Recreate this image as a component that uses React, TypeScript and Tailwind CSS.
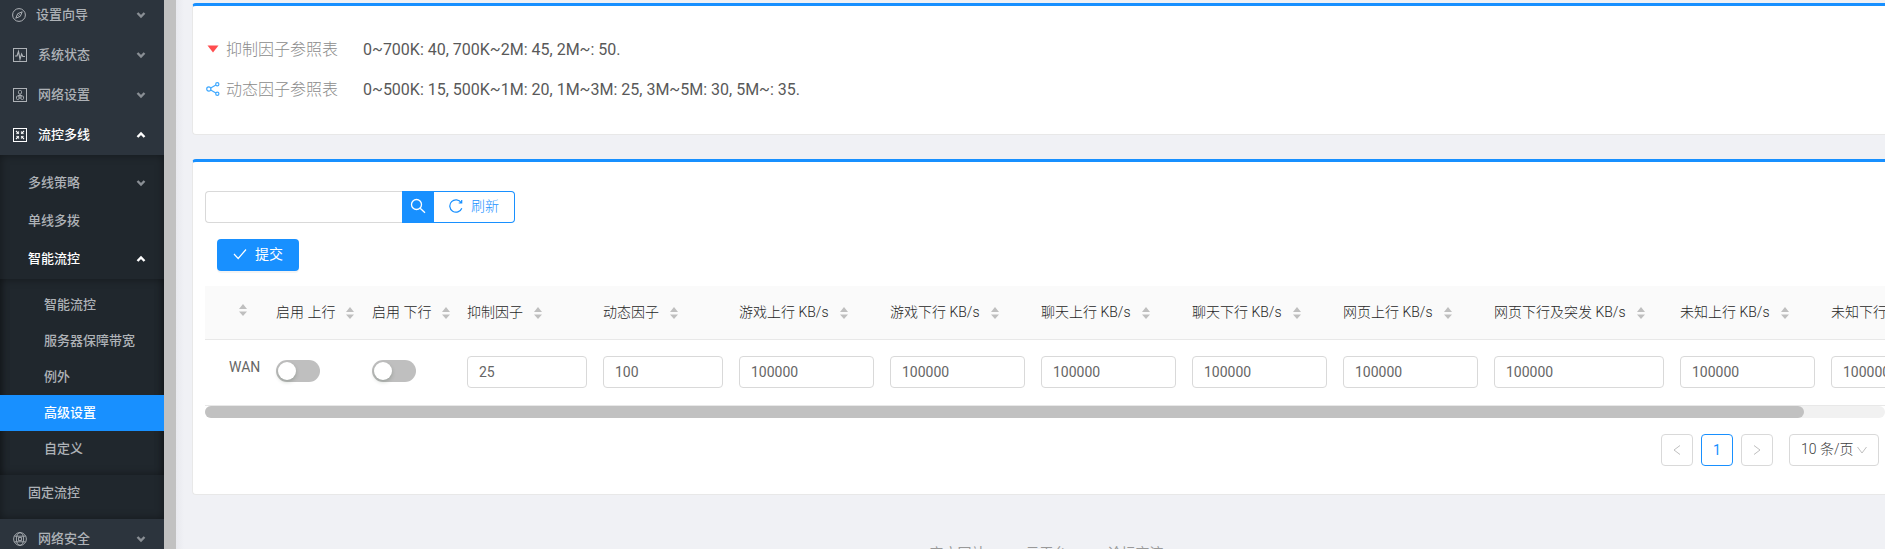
import React, { useState } from 'react';

type IconProps = { className?: string };

const Chevron: React.FC<{ open?: boolean }> = ({ open }) => (
  <svg viewBox="0 0 10 8" className="w-[10px] h-2" fill="none" stroke="currentColor" strokeWidth="2.4">
    <path d={open ? 'M1.5 6 5 2.5 8.5 6' : 'M1.5 2 5 5.5 8.5 2'} />
  </svg>
);

const CompassIcon: React.FC<IconProps> = ({ className }) => (
  <svg viewBox="0 0 14 14" className={className} fill="none" stroke="currentColor">
    <circle cx="7" cy="7" r="6.4" />
    <path d="M10.2 3.8 8.3 8.3 3.8 10.2 5.7 5.7Z" />
    <path d="M6.4 7.6 7.6 6.4" />
  </svg>
);

const StatusIcon: React.FC<IconProps> = ({ className }) => (
  <svg viewBox="0 0 14 14" className={className} fill="none" stroke="currentColor">
    <rect x="0.5" y="0.5" width="13" height="13" />
    <path d="M2 8h2l1.5-4.5L7 11l1.6-5L9.8 8.5H12" strokeWidth="1.2" />
  </svg>
);

const NetworkIcon: React.FC<IconProps> = ({ className }) => (
  <svg viewBox="0 0 14 14" className={className} fill="none" stroke="currentColor">
    <rect x="0.5" y="0.5" width="13" height="13" />
    <g strokeWidth="0.9">
      <rect x="5.5" y="2.5" width="3" height="3.4" rx="1" />
      <path d="M7 6v5M5 7.5h4" />
      <rect x="3.5" y="8" width="2.5" height="3.5" rx="1" />
      <rect x="8" y="8" width="2.5" height="3.5" rx="1" />
    </g>
  </svg>
);

const FlowIcon: React.FC<IconProps> = ({ className }) => (
  <svg viewBox="0 0 14 14" className={className} fill="none" stroke="currentColor">
    <rect x="0.5" y="0.5" width="13" height="13" />
    <path d="M3 3l2.6 2.6M11 3 8.4 5.6M3 11l2.6-2.6M11 11 8.4 8.4" strokeWidth="1.1" />
    <path d="M5.6 3.2v2.4H3.2M8.4 3.2v2.4h2.4M5.6 10.8V8.4H3.2M8.4 10.8V8.4h2.4" strokeWidth="0.8" />
  </svg>
);

const GlobeIcon: React.FC<IconProps> = ({ className }) => (
  <svg viewBox="0 0 14 14" className={className} fill="none" stroke="currentColor" strokeWidth="0.9">
    <circle cx="7" cy="7" r="6.4" />
    <ellipse cx="7" cy="7" rx="3.6" ry="6.4" />
    <path d="M1.4 4.2h11.2M1.4 9.8h11.2" />
    <rect x="5.6" y="5.6" width="2.8" height="2.8" />
  </svg>
);

const flowPages = ['智能流控', '服务器保障带宽', '例外', '高级设置', '自定义'];

const columns = [
  { title: '抑制因子', value: '25', width: 'w-[136px]' },
  { title: '动态因子', value: '100', width: 'w-[136px]' },
  { title: '游戏上行 KB/s', value: '100000', width: 'w-[151px]' },
  { title: '游戏下行 KB/s', value: '100000', width: 'w-[151px]' },
  { title: '聊天上行 KB/s', value: '100000', width: 'w-[151px]' },
  { title: '聊天下行 KB/s', value: '100000', width: 'w-[151px]' },
  { title: '网页上行 KB/s', value: '100000', width: 'w-[151px]' },
  { title: '网页下行及突发 KB/s', value: '100000', width: 'w-[186px]' },
  { title: '未知上行 KB/s', value: '100000', width: 'w-[151px]' },
  { title: '未知下行 KB/s', value: '100000', width: 'w-[151px]' },
];

type MenuItemProps = { label: string; icon: React.FC<IconProps>; open?: boolean; className?: string };

const MenuItem: React.FC<MenuItemProps> = ({ label, icon: Icon, open, className = 'pl-[13px] gap-[11px]' }) => (
  <a href="#" className={`flex h-10 items-center pr-[18px] ${className} ${open ? 'text-white' : 'text-[#aeb2b7]'}`}>
    <Icon className="w-[14px] h-[14px]" />
    <span className="flex-1">{label}</span>
    <span className={open ? 'text-white' : 'text-[#8a8f95]'}>
      <Chevron open={open} />
    </span>
  </a>
);

const Sidebar: React.FC = () => (
  <aside className="flex w-44 shrink-0 overflow-hidden">
    <nav className="-mt-[5px] flex-1 bg-[#2c343d] text-[13px] font-medium">
      <MenuItem label="设置向导" icon={CompassIcon} className="pl-3 gap-[10px]" />
      <MenuItem label="系统状态" icon={StatusIcon} />
      <MenuItem label="网络设置" icon={NetworkIcon} />
      <MenuItem label="流控多线" icon={FlowIcon} open />
      <div className="bg-[#20272d] py-2 text-[#aeb2b7] shadow-[inset_0_0_8px_rgba(0,0,0,0.4)]">
        <a href="#" className="flex h-[39px] items-center justify-between pl-7 pr-[18px]">
          多线策略
          <span className="text-[#8a8f95]"><Chevron /></span>
        </a>
        <a href="#" className="flex h-[38px] items-center pl-7">单线多拨</a>
        <a href="#" className="flex h-[38px] items-center justify-between pl-7 pr-[18px] text-white">
          智能流控
          <Chevron open />
        </a>
        <div className="mt-px py-2 shadow-[inset_0_0_8px_rgba(0,0,0,0.4)]">
          {flowPages.map((page) => (
            <a
              key={page}
              href="#"
              className={`flex h-9 items-center pl-11 ${page === '高级设置' ? 'bg-[#1890ff] text-white' : ''}`}
            >
              {page}
            </a>
          ))}
        </div>
        <a href="#" className="flex h-9 items-center pl-7">固定流控</a>
      </div>
      <MenuItem label="网络安全" icon={GlobeIcon} />
    </nav>
    {/* Scrollbar */}
    <div className="w-3 bg-[#c1c1c1]" />
  </aside>
);

const Sorter: React.FC = () => (
  <svg viewBox="0 0 8 12" className="inline-block w-2 h-3 text-[#bfbfbf]" fill="currentColor">
    <path d="M4 0 8 5H0zM4 12 0 7.5H8z" />
  </svg>
);

const HeaderLabel: React.FC<{ title: string }> = ({ title }) => (
  <div className="flex items-end gap-[11px] whitespace-nowrap">
    {title}
    <span className="flex pb-[3px]"><Sorter /></span>
  </div>
);

const Toggle: React.FC<{ label: string }> = ({ label }) => {
  const [on, setOn] = useState(false);
  return (
    <button
      type="button"
      role="switch"
      aria-checked={on}
      aria-label={label}
      onClick={() => setOn(!on)}
      className={`flex h-[22px] w-11 items-center rounded-full px-0.5 ${on ? 'justify-end bg-[#1890ff]' : 'bg-[#bfbfbf]'}`}
    >
      <span className="h-[18px] w-[18px] rounded-full bg-white shadow-[0_2px_4px_rgba(0,35,11,0.2)]" />
    </button>
  );
};

const FactorTable: React.FC = () => (
  <div className="mt-[15px] overflow-hidden">
    <table className="w-[1768px] table-fixed border-collapse text-left text-sm">
      <thead>
        <tr className="h-[53px] border-b border-[#e8e8e8] bg-[#fafafa] text-[#262626]">
          <th className="w-[63px] pb-2 pl-[34px] font-normal" aria-label="线路"><Sorter /></th>
          <th className="w-24 px-2 font-light"><HeaderLabel title="启用 上行" /></th>
          <th className="w-[95px] px-2 font-light"><HeaderLabel title="启用 下行" /></th>
          {columns.map(({ title, width }) => (
            <th key={title} className={`${width} px-2 font-light`}><HeaderLabel title={title} /></th>
          ))}
        </tr>
      </thead>
      <tbody>
        <tr className="h-[66px] border-b border-[#e8e8e8] text-[#666666]">
          <td className="pb-[10px] pl-6">WAN</td>
          <td className="px-2 pb-0.5"><Toggle label="启用 上行" /></td>
          <td className="px-2 pb-0.5"><Toggle label="启用 下行" /></td>
          {columns.map(({ title, value }) => (
            <td key={title} className="px-2">
              <input
                aria-label={title}
                defaultValue={value}
                className="block h-8 w-full rounded border border-[#d9d9d9] bg-white px-[11px] outline-none focus:border-[#40a9ff]"
              />
            </td>
          ))}
        </tr>
      </tbody>
    </table>
    <div className="h-3 rounded-full bg-[#f1f1f1]">
      <div className="h-3 w-[95.2%] rounded-full bg-[#c1c1c1]" />
    </div>
  </div>
);

const Pagination: React.FC = () => (
  <div className="mt-4 flex items-center justify-end gap-2 pr-1.5 text-sm">
    <button type="button" aria-label="上一页" className="flex h-8 w-8 items-center justify-center rounded border border-[#d9d9d9] text-[#bfbfbf]">
      <svg viewBox="0 0 8 10" className="w-2 h-[10px]" fill="none" stroke="currentColor"><path d="M7 .5 1 5l6 4.5" /></svg>
    </button>
    <button type="button" className="h-8 w-8 rounded border border-[#1890ff] text-[#1890ff]">1</button>
    <button type="button" aria-label="下一页" className="flex h-8 w-8 items-center justify-center rounded border border-[#d9d9d9] text-[#bfbfbf]">
      <svg viewBox="0 0 8 10" className="w-2 h-[10px]" fill="none" stroke="currentColor"><path d="m1 .5 6 4.5-6 4.5" /></svg>
    </button>
    <div className="relative ml-2">
      <select aria-label="每页条数" className="block h-8 w-[90px] appearance-none rounded border border-[#d9d9d9] bg-white pb-0.5 pl-[11px] font-light text-[#404040]">
        <option>10 条/页</option>
        <option>20 条/页</option>
      </select>
      <svg viewBox="0 0 10 8" className="pointer-events-none absolute right-3 top-3 w-[10px] h-2 text-[#bfbfbf]" fill="none" stroke="currentColor">
        <path d="M.5 1 5 7l4.5-6" />
      </svg>
    </div>
  </div>
);

const App: React.FC = () => {
  return (
    <div className="flex h-screen overflow-hidden bg-[#f0f1f5] font-['Roboto','Noto_Sans_CJK_SC',sans-serif]">
      <Sidebar />
      <main className="min-w-0 flex-1 bg-linear-to-r from-[#e8e9ee] to-[#f0f1f5] to-[8px] pl-4 pt-[3px]">
        {/* Reference values */}
        <section className="rounded-l border-b border-l border-t-3 border-b-[#e8e8e8] border-l-[#e8e8e8] border-t-[#1890ff] bg-white pb-6 pl-[13px] pt-6">
          <dl className="text-base text-[#595959]">
            <div className="flex h-10 items-center gap-1.5">
              <svg viewBox="0 0 14 14" className="mb-0.5 w-[14px] h-[14px]" fill="#ff4d4f"><path d="M1.5 3.5h11L7 10.5z" /></svg>
              <dt className="w-[131px] font-light text-[#8c8c8c]">抑制因子参照表</dt>
              <dd>0~700K: 40, 700K~2M: 45, 2M~: 50.</dd>
            </div>
            <div className="flex h-10 items-center gap-1.5">
              <svg viewBox="0 0 14 14" className="mb-0.5 w-[14px] h-[14px]" fill="none" stroke="#40a9ff" strokeWidth="1.2">
                <circle cx="2.8" cy="7" r="2.1" />
                <circle cx="11.3" cy="2.3" r="1.6" />
                <circle cx="11.3" cy="11.7" r="1.6" />
                <path d="M4.7 6 9.9 3.1M4.7 8l5.2 2.9" />
              </svg>
              <dt className="w-[131px] font-light text-[#8c8c8c]">动态因子参照表</dt>
              <dd>0~500K: 15, 500K~1M: 20, 1M~3M: 25, 3M~5M: 30, 5M~: 35.</dd>
            </div>
          </dl>
        </section>

        {/* Factor settings */}
        <section className="mt-6 rounded-l border-b border-l border-t-3 border-b-[#e8e8e8] border-l-[#e8e8e8] border-t-[#1890ff] bg-white pb-7 pl-3 pt-[29px]">
          <div className="flex text-sm">
            <input aria-label="搜索" className="h-8 w-[197px] rounded-l border border-r-0 border-[#d9d9d9] px-[11px] outline-none" />
            <button type="button" aria-label="搜索" className="flex h-8 w-8 items-center justify-center bg-[#1890ff] pb-0.5 text-white">
              <svg viewBox="0 0 16 16" className="w-4 h-4" fill="none" stroke="currentColor" strokeWidth="1.3">
                <circle cx="6.5" cy="6.5" r="5" />
                <path d="m10.2 10.2 4.8 4.6" />
              </svg>
            </button>
            <button type="button" className="flex h-8 items-center gap-2 rounded-r border border-l-0 border-[#1890ff] px-[15px] pb-0.5 font-light text-[#1890ff]">
              <svg viewBox="0 0 14 14" className="w-[14px] h-[14px]" fill="none" stroke="currentColor" strokeWidth="1.2">
                <path d="M12.2 3.6A6.2 6.2 0 1 0 12.8 9.2M12.7 1v3h-3" />
              </svg>
              刷新
            </button>
          </div>
          <button type="button" className="ml-3 mt-4 flex h-8 items-center gap-2 rounded bg-[#1890ff] px-4 pb-0.5 text-sm text-white shadow-[0_2px_0_rgba(0,0,0,0.045)]">
            <svg viewBox="0 0 14 14" className="w-[14px] h-[14px]" fill="none" stroke="currentColor" strokeWidth="1.2">
              <path d="M1 7l4.2 4.5L13 2.5" />
            </svg>
            提交
          </button>
          <FactorTable />
          <Pagination />
        </section>

        <footer className="mt-12 flex justify-center gap-10 pl-4 text-sm text-[#999999]">
          <a href="#">官方网站</a>
          <a href="#">云平台</a>
          <a href="#">论坛交流</a>
        </footer>
      </main>
    </div>
  );
};

export default App;
